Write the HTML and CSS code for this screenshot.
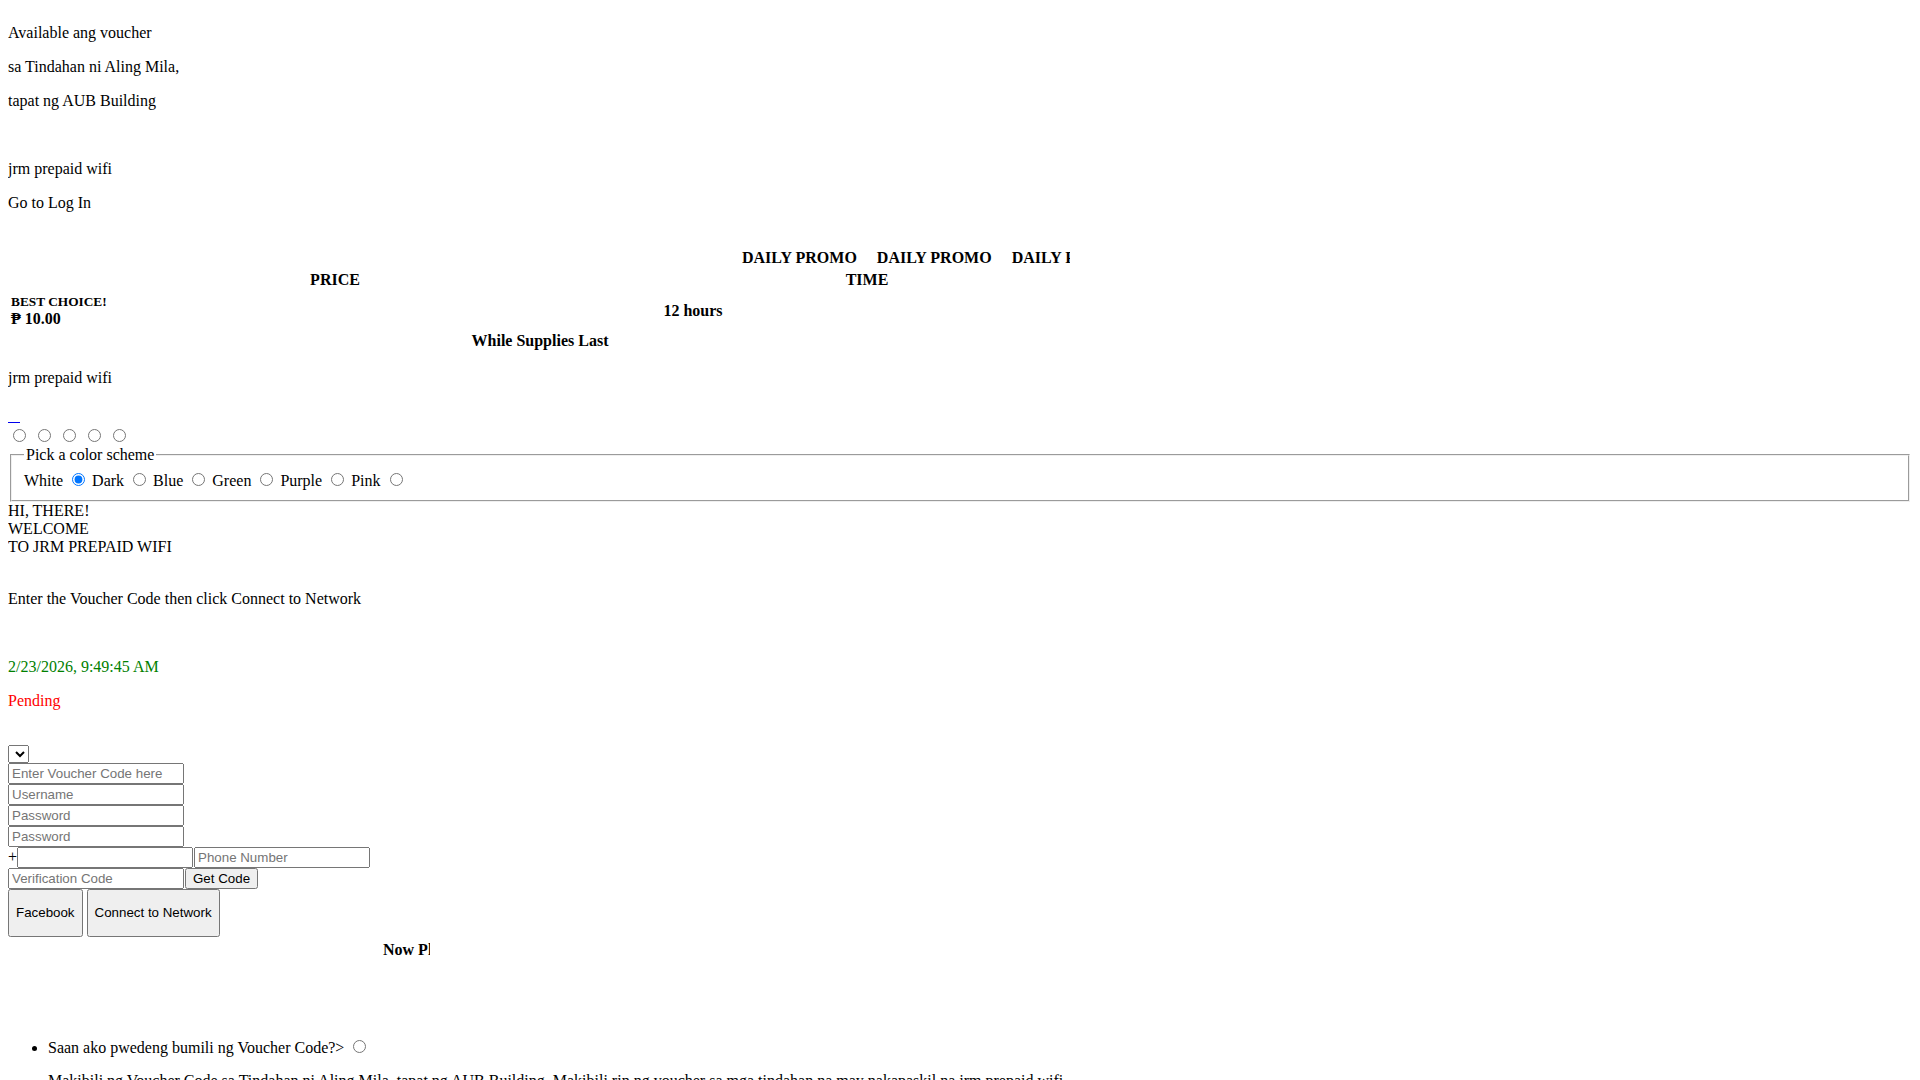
FILE: index.html
```html
<!DOCTYPE html>
<html lang="tl">
<head>
<meta charset="utf-8">
<title>JRM Prepaid WiFi</title>
<link rel="stylesheet" href="styles.css">
</head>
<body>
<div class="notice">
  <p>Available ang voucher</p>
  <p>sa Tindahan ni Aling Mila,</p>
  <p>tapat ng AUB Building</p>
  <p>&nbsp;</p>
  <p>jrm prepaid wifi</p>
  <p>Go to Log In</p>
</div>

<div class="rates">
  <div class="marquee"><div class="marquee-track"><span>DAILY PROMO</span><span>DAILY PROMO</span><span>DAILY PROMO</span></div></div>
  <div class="rate-head"><div>PRICE</div><div>TIME</div></div>
  <div class="rate-row">
    <div class="rate-price"><div class="best">BEST CHOICE!</div><div class="amount">₱ 10.00</div></div>
    <div class="rate-time">12 hours</div>
  </div>
  <div class="rate-note">While Supplies Last</div>
</div>

<p class="brand">jrm prepaid wifi</p>
<div class="linkline"><a class="empty-link" href="#">&nbsp;&nbsp;&nbsp;</a></div>
<div class="dots"><input type="radio" name="slide"> <input type="radio" name="slide"> <input type="radio" name="slide"> <input type="radio" name="slide"> <input type="radio" name="slide"></div>

<fieldset class="scheme">
  <legend>Pick a color scheme</legend>
  White <input type="radio" name="scheme" checked> Dark <input type="radio" name="scheme"> Blue <input type="radio" name="scheme"> Green <input type="radio" name="scheme"> Purple <input type="radio" name="scheme"> Pink <input type="radio" name="scheme">
</fieldset>

<div class="welcome">HI, THERE!<br>WELCOME<br>TO JRM PREPAID WIFI</div>
<p class="instr">Enter the Voucher Code then click Connect to Network</p>
<p>&nbsp;</p>
<p class="date">2/23/2026, 9:49:45 AM</p>
<p class="status">Pending</p>

<form class="login">
  <select class="sel"></select>
  <input class="field" type="text" placeholder="Enter Voucher Code here">
  <input class="field" type="text" placeholder="Username">
  <input class="field" type="password" placeholder="Password">
  <input class="field" type="password" placeholder="Password">
  <div class="phone-row"><span class="plus">+</span><input class="field" type="text"><input class="field field-next" type="text" placeholder="Phone Number"></div>
  <div class="verify-row"><input class="field" type="text" placeholder="Verification Code"><button class="btn-small" type="button">Get Code</button></div>
  <div class="btn-row"><button class="btn-big" type="button">Facebook</button><button class="btn-big" type="button">Connect to Network</button></div>
</form>

<div class="now"><div class="now-track">Now Playing</div></div>

<ul class="faq">
  <li>Saan ako pwedeng bumili ng Voucher Code?&gt; <input type="radio" name="faq">
    <p class="answer">Makibili ng Voucher Code sa Tindahan ni Aling Mila, tapat ng AUB Building. Makibili rin ng voucher sa mga tindahan na may nakapaskil na jrm prepaid wifi.</p>
  </li>
</ul>
</body>
</html>
```

FILE: styles.css
```css
html { background: #fff; }
body {
  margin: 8px;
  font-family: "Liberation Serif", "DejaVu Serif", serif;
  font-size: 16px;
  color: #000;
}
p { margin: 16px 0; }

.rates { width: 1064px; margin-top: 37px; font-weight: bold; }
.marquee { width: 1062px; overflow: hidden; height: 18px; line-height: 18px; }
.marquee-track { display: flex; gap: 20px; padding-left: 734px; white-space: nowrap; }
.rate-head { display: grid; grid-template-columns: 654px 410px; text-align: center; margin-top: 4px; height: 18px; line-height: 18px; }
.rate-row { display: grid; grid-template-columns: 306px 758px; align-items: center; margin-top: 4px; }
.rate-price { padding-left: 3px; }
.best { font-size: 13.333px; line-height: 17px; }
.amount { line-height: 18px; }
.rate-time { text-align: center; }
.rate-note { text-align: center; margin-top: 4px; line-height: 18px; }

.brand { margin: 19px 0 0; }
.linkline { height: 19px; margin-top: 20px; line-height: 18px; }
.empty-link { color: #0000ee; }
.dots { height: 18px; line-height: 18px; }

.scheme { margin: 2px 2px 0; }

.welcome { line-height: 18px; }
.instr { margin-top: 34px; }
.date { color: #008000; }
.status { color: #ff0000; }

.login { margin-top: 35px; }
.sel { display: block; width: 21px; height: 18px; margin: 0; font-family: "Liberation Sans", Arial, sans-serif; font-size: 13.333px; }
.field {
  display: block;
  box-sizing: border-box;
  width: 176px;
  height: 21px;
  margin: 0;
  font-family: "Liberation Sans", Arial, sans-serif;
  font-size: 13.333px;
}
.field-next { margin-left: 1px; }
.phone-row, .verify-row { display: flex; align-items: center; }
.plus { width: 9px; }
.btn-small {
  box-sizing: border-box;
  height: 21px;
  margin: 0 0 0 1px;
  font-family: "Liberation Sans", Arial, sans-serif;
  font-size: 13.333px;
}
.btn-row { display: flex; gap: 4px; }
.btn-big {
  box-sizing: border-box;
  height: 48px;
  margin: 0;
  font-family: "Liberation Sans", Arial, sans-serif;
  font-size: 13.333px;
}

.now { width: 422px; overflow: hidden; margin-top: 4px; font-weight: bold; line-height: 18px; }
.now-track { padding-left: 375px; white-space: nowrap; }

.faq { margin: 78px 0 0; padding-left: 40px; }
.faq li { line-height: 18px; }
.answer { margin: 15px 0 0; white-space: nowrap; }
```
